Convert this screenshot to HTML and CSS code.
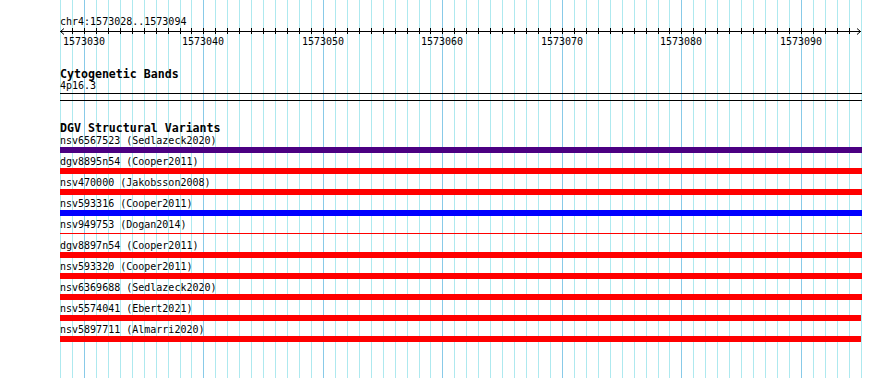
FILE: index.html
```html
<!DOCTYPE html>
<html lang="en">
<head>
  <meta charset="UTF-8">
  <meta name="viewport" content="width=device-width, initial-scale=1.0">
  <title>chr4:1573028..1573094</title>
  <link rel="stylesheet" href="styles.css">
</head>
<body>
  <div class="browser">
    <svg class="grid" id="grid" width="890" height="378"></svg>

    <div class="tracks">
      <div class="location">chr4:1573028..1573094</div>
      <svg class="ruler" id="ruler" width="802" height="18"></svg>

      <div class="track track-bands">
        <div class="track-title">Cytogenetic Bands</div>
        <div class="band-label">4p16.3</div>
        <div class="band"></div>
      </div>

      <div class="track track-dgv">
        <div class="track-title">DGV Structural Variants</div>

        <div class="feature">
          <div class="feature-label">nsv6567523 (Sedlazeck2020)</div>
          <div class="bar bar-indigo"></div>
        </div>
        <div class="feature">
          <div class="feature-label">dgv8895n54 (Cooper2011)</div>
          <div class="bar bar-red"></div>
        </div>
        <div class="feature">
          <div class="feature-label">nsv470000 (Jakobsson2008)</div>
          <div class="bar bar-red"></div>
        </div>
        <div class="feature">
          <div class="feature-label">nsv593316 (Cooper2011)</div>
          <div class="bar bar-blue"></div>
        </div>
        <div class="feature">
          <div class="feature-label">nsv949753 (Dogan2014)</div>
          <div class="bar bar-thin"></div>
        </div>
        <div class="feature">
          <div class="feature-label">dgv8897n54 (Cooper2011)</div>
          <div class="bar bar-red"></div>
        </div>
        <div class="feature">
          <div class="feature-label">nsv593320 (Cooper2011)</div>
          <div class="bar bar-red"></div>
        </div>
        <div class="feature">
          <div class="feature-label">nsv6369688 (Sedlazeck2020)</div>
          <div class="bar bar-red"></div>
        </div>
        <div class="feature">
          <div class="feature-label">nsv5574041 (Ebert2021)</div>
          <div class="bar bar-red" style="width: 801px"></div>
        </div>
        <div class="feature">
          <div class="feature-label">nsv5897711 (Almarri2020)</div>
          <div class="bar bar-red" style="width: 801px"></div>
        </div>
      </div>
    </div>
  </div>

  <script src="script.js"></script>
</body>
</html>
```

FILE: styles.css
```css
/* Vue du navigateur */
* {
  margin: 0;
  padding: 0;
  box-sizing: border-box;
}

body {
  font-family: 'DejaVu Sans Mono', 'Liberation Mono', monospace;
  font-size: 10px;
  color: #000;
  background: #fff;
}

.browser {
  position: relative;
  width: 890px;
  height: 378px;
  overflow: hidden;
}

.grid {
  position: absolute;
  top: 0;
  left: 0;
}

.grid line {
  stroke: #aee9ef;
  stroke-width: 1;
}

.grid line.major {
  stroke: #88cae8;
}

.tracks {
  position: relative;
  margin-left: 60px;
  width: 802px;
  padding-top: 16px;
}

.location {
  line-height: 12px;
  height: 12px;
}

.ruler {
  display: block;
  overflow: visible;
}

.ruler line,
.ruler polyline {
  stroke: #000;
  stroke-width: 1;
  fill: none;
}

.ruler text {
  font-family: 'DejaVu Sans Mono', 'Liberation Mono', monospace;
  font-size: 10px;
  fill: #000;
}

.track-title {
  font-weight: bold;
  font-size: 11.6px;
  line-height: 12px;
  height: 12px;
}

.track-bands {
  margin-top: 22px;
}

.track-dgv {
  margin-top: 21px;
}

.band-label {
  line-height: 12px;
  height: 12px;
}

.band {
  margin-top: 1px;
  height: 8px;
  border-top: 1px solid #000;
  border-bottom: 1px solid #000;
}

.feature {
  padding-bottom: 2px;
}

.feature-label {
  padding-top: 1px;
  line-height: 12px;
  height: 13px;
  white-space: nowrap;
}

.bar {
  height: 6px;
  width: 802px;
}

.bar-indigo {
  background: #4b0082;
}

.bar-red {
  background: #ff0000;
}

.bar-blue {
  background: #0000ff;
}

.bar-thin {
  position: relative;
}

.bar-thin::after {
  content: '';
  position: absolute;
  left: 0;
  right: 0;
  top: 2px;
  height: 1px;
  background: #ff0000;
}
```

FILE: script.js
```js
// Grille et règle à partir des coordonnées
const START = 1573028;
const END = 1573094;
const ORIGIN = 60;
const SCALE = 11.95;
const SVG_NS = 'http://www.w3.org/2000/svg';

function xFor(bp) {
  return Math.round(ORIGIN + (bp - START) * SCALE);
}

function el(name, attrs) {
  const node = document.createElementNS(SVG_NS, name);
  for (const key in attrs) node.setAttribute(key, attrs[key]);
  return node;
}

const grid = document.getElementById('grid');
for (let bp = START; bp <= END + 1; bp++) {
  const x = xFor(bp) + 0.5;
  const line = el('line', { x1: x, x2: x, y1: 0, y2: 378 });
  if (bp % 10 === 0) line.classList.add('major');
  grid.appendChild(line);
}

const ruler = document.getElementById('ruler');
ruler.appendChild(el('line', { x1: 0, x2: 801, y1: 3.5, y2: 3.5 }));
ruler.appendChild(el('polyline', { points: '4,0.5 0.5,3.5 4,6.5' }));
ruler.appendChild(el('polyline', { points: '797,0.5 800.5,3.5 797,6.5' }));

for (let bp = START + 1; bp <= END; bp++) {
  const x = xFor(bp) - ORIGIN + 0.5;
  ruler.appendChild(el('line', { x1: x, x2: x, y1: 0, y2: 6 }));
  if (bp % 10 === 0) {
    const label = el('text', { x: xFor(bp) - ORIGIN, y: 17, 'text-anchor': 'middle' });
    label.textContent = String(bp);
    ruler.appendChild(label);
  }
}
```
